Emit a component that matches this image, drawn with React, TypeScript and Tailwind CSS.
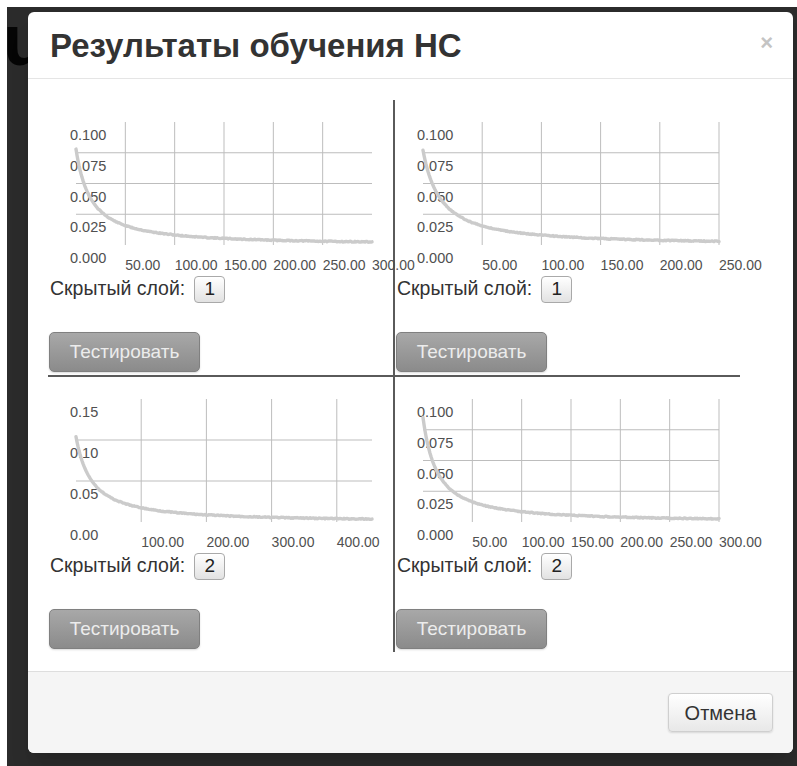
import React from "react";

// Loss curves: value falls off roughly like v0 / (1 + x/k)^1.2
interface ChartProps {
  xMax: number;
  xLabels: number[];
  xLines: number[];
  yMax: number;
  yLabels: number[];
  yLines: number[];
  digits: number;
  v0: number;
  k: number;
  seed: number;
}

const W = 345;
const H = 175;
const X0 = 28;
const X1 = 324;
const Y_TOP = 22;
const Y_BOT = 145;

const noise = (seed: number) => {
  let s = seed;
  return () => {
    s = (s * 9301 + 49297) % 233280;
    return s / 233280 - 0.5;
  };
};

const LossChart = ({ xMax, xLabels, xLines, yMax, yLabels, yLines, digits, v0, k, seed }: ChartProps) => {
  const px = (x: number) => X0 + ((X1 - X0) * x) / xMax;
  const py = (v: number) => Y_BOT - ((Y_BOT - Y_TOP) * v) / yMax;
  const rnd = noise(seed);

  const pts: string[] = [];
  for (let sx = X0; sx <= X1; sx += 1) {
    const x = ((sx - X0) / (X1 - X0)) * xMax;
    const v = v0 / Math.pow(1 + x / k, 1.2);
    const jitter = sx > X0 + 20 ? rnd() * 0.9 : 0;
    pts.push(`${sx},${(py(v) + jitter).toFixed(2)}`);
  }

  return (
    <svg width={W} height={H} className="block overflow-visible">
      {yLines.map((v) => (
        <line key={`h${v}`} x1={X0} x2={X1} y1={py(v)} y2={py(v)} stroke="#bdbdbd" strokeWidth={1} />
      ))}
      {xLines.map((x) => (
        <line key={`v${x}`} x1={px(x)} x2={px(x)} y1={Y_TOP} y2={Y_BOT} stroke="#bdbdbd" strokeWidth={1} />
      ))}
      {yLabels.map((v) => (
        <text key={`yl${v}`} x={22} y={py(v) + 18} fontSize={14.5} fill="#505050" fontFamily="'Liberation Sans', Arial, sans-serif">
          {v.toFixed(digits)}
        </text>
      ))}
      {xLabels.map((x) => (
        <text key={`xl${x}`} x={px(x)} y={170} fontSize={14} fill="#505050" fontFamily="'Liberation Sans', Arial, sans-serif">
          {x.toFixed(2)}
        </text>
      ))}
      <polyline points={pts.join(" ")} fill="none" stroke="#cbcbcb" strokeWidth={3.4} strokeLinejoin="round" strokeLinecap="round" />
    </svg>
  );
};

const yThree = [0.1, 0.075, 0.05, 0.025, 0];

const charts: (ChartProps & { layer: number })[] = [
  { xMax: 300, xLabels: [50, 100, 150, 200, 250, 300], xLines: [50, 100, 150, 200, 250], yMax: 0.1, yLabels: yThree, yLines: [0.075, 0.05, 0.025], digits: 3, v0: 0.078, k: 18, seed: 11, layer: 1 },
  { xMax: 250, xLabels: [50, 100, 150, 200, 250], xLines: [50, 100, 150, 200, 250], yMax: 0.1, yLabels: yThree, yLines: [0.075, 0.05, 0.025], digits: 3, v0: 0.077, k: 18, seed: 27, layer: 1 },
  { xMax: 454, xLabels: [100, 200, 300, 400], xLines: [100, 200, 300, 400], yMax: 0.15, yLabels: [0.15, 0.1, 0.05, 0], yLines: [0.1, 0.05], digits: 2, v0: 0.104, k: 29, seed: 43, layer: 2 },
  { xMax: 300, xLabels: [50, 100, 150, 200, 250, 300], xLines: [50, 100, 150, 200, 250, 300], yMax: 0.1, yLabels: yThree, yLines: [0.075, 0.05, 0.025], digits: 3, v0: 0.085, k: 17, seed: 59, layer: 2 },
];

const cellBorders = [
  "border-r-2 border-b-2 border-[#5a5a5a] pb-[3px]",
  "border-b-2 border-[#5a5a5a] pb-[3px]",
  "border-r-2 border-[#5a5a5a] pb-[3px]",
  "pb-[3px]",
];

export default function App() {
  return (
    <div className="w-[797px] h-[766px] bg-white pt-[7px] pl-[7px]" style={{ fontFamily: "'Liberation Sans', Arial, sans-serif" }}>
      <div className="relative h-full bg-[#2b2b2b] overflow-hidden pt-[5px] pl-[21px]">
        {/* page heading peeking out behind the dialog */}
        <span className="absolute left-[-4px] top-[-3px] text-[72px] font-bold leading-none text-[#050505]">u</span>

        <div className="relative w-[765px] bg-white rounded-md shadow-xl">
          <div className="h-[67px] border-b border-[#e5e5e5] flex items-center justify-between pl-[22px] pr-[20px]">
            <h3 className="text-[33px] font-bold text-[#333] leading-none">Результаты обучения НС</h3>
            <span className="text-[22px] font-bold text-[#c4c4c4] leading-none -mt-[4px]">×</span>
          </div>

          <div className="pt-[21px] pb-[19px] px-[20px]">
            <div className="grid grid-cols-[347px_345px]">
              {charts.map((c, i) => (
                <div key={i} className={`flex flex-col ${cellBorders[i]}`}>
                  <LossChart {...c} />
                  <div className="flex items-center h-[28px] pl-[2px] text-[19.5px] text-[#333]">
                    <span>Скрытый слой:</span>
                    <span className="ml-[9px] w-[31px] h-[27px] flex items-center justify-center rounded-[4px] border border-[#a9a9a9] bg-gradient-to-b from-white to-[#e2e2e2] text-[19px] text-[#222] shadow-[inset_0_1px_0_rgba(255,255,255,0.8)]">
                      {c.layer}
                    </span>
                  </div>
                  <button className="mt-[29px] ml-[1px] w-[151px] h-[40px] rounded-[5px] border border-[#808080] bg-gradient-to-b from-[#a8a8a8] to-[#8b8b8b] text-[19px] text-[#ececec] shadow-[0_1px_2px_rgba(0,0,0,0.15)]">
                    Тестировать
                  </button>
                </div>
              ))}
            </div>
          </div>

          <div className="h-[82px] border-t border-[#dedede] bg-[#f5f5f5] rounded-b-md flex items-center justify-end pr-[20px]">
            <button className="w-[105px] h-[39px] rounded-[4px] border border-[#cfcfcf] bg-gradient-to-b from-white to-[#e8e8e8] text-[20px] text-[#333] shadow-[0_1px_2px_rgba(0,0,0,0.12)]">
              Отмена
            </button>
          </div>
        </div>
      </div>
    </div>
  );
}
